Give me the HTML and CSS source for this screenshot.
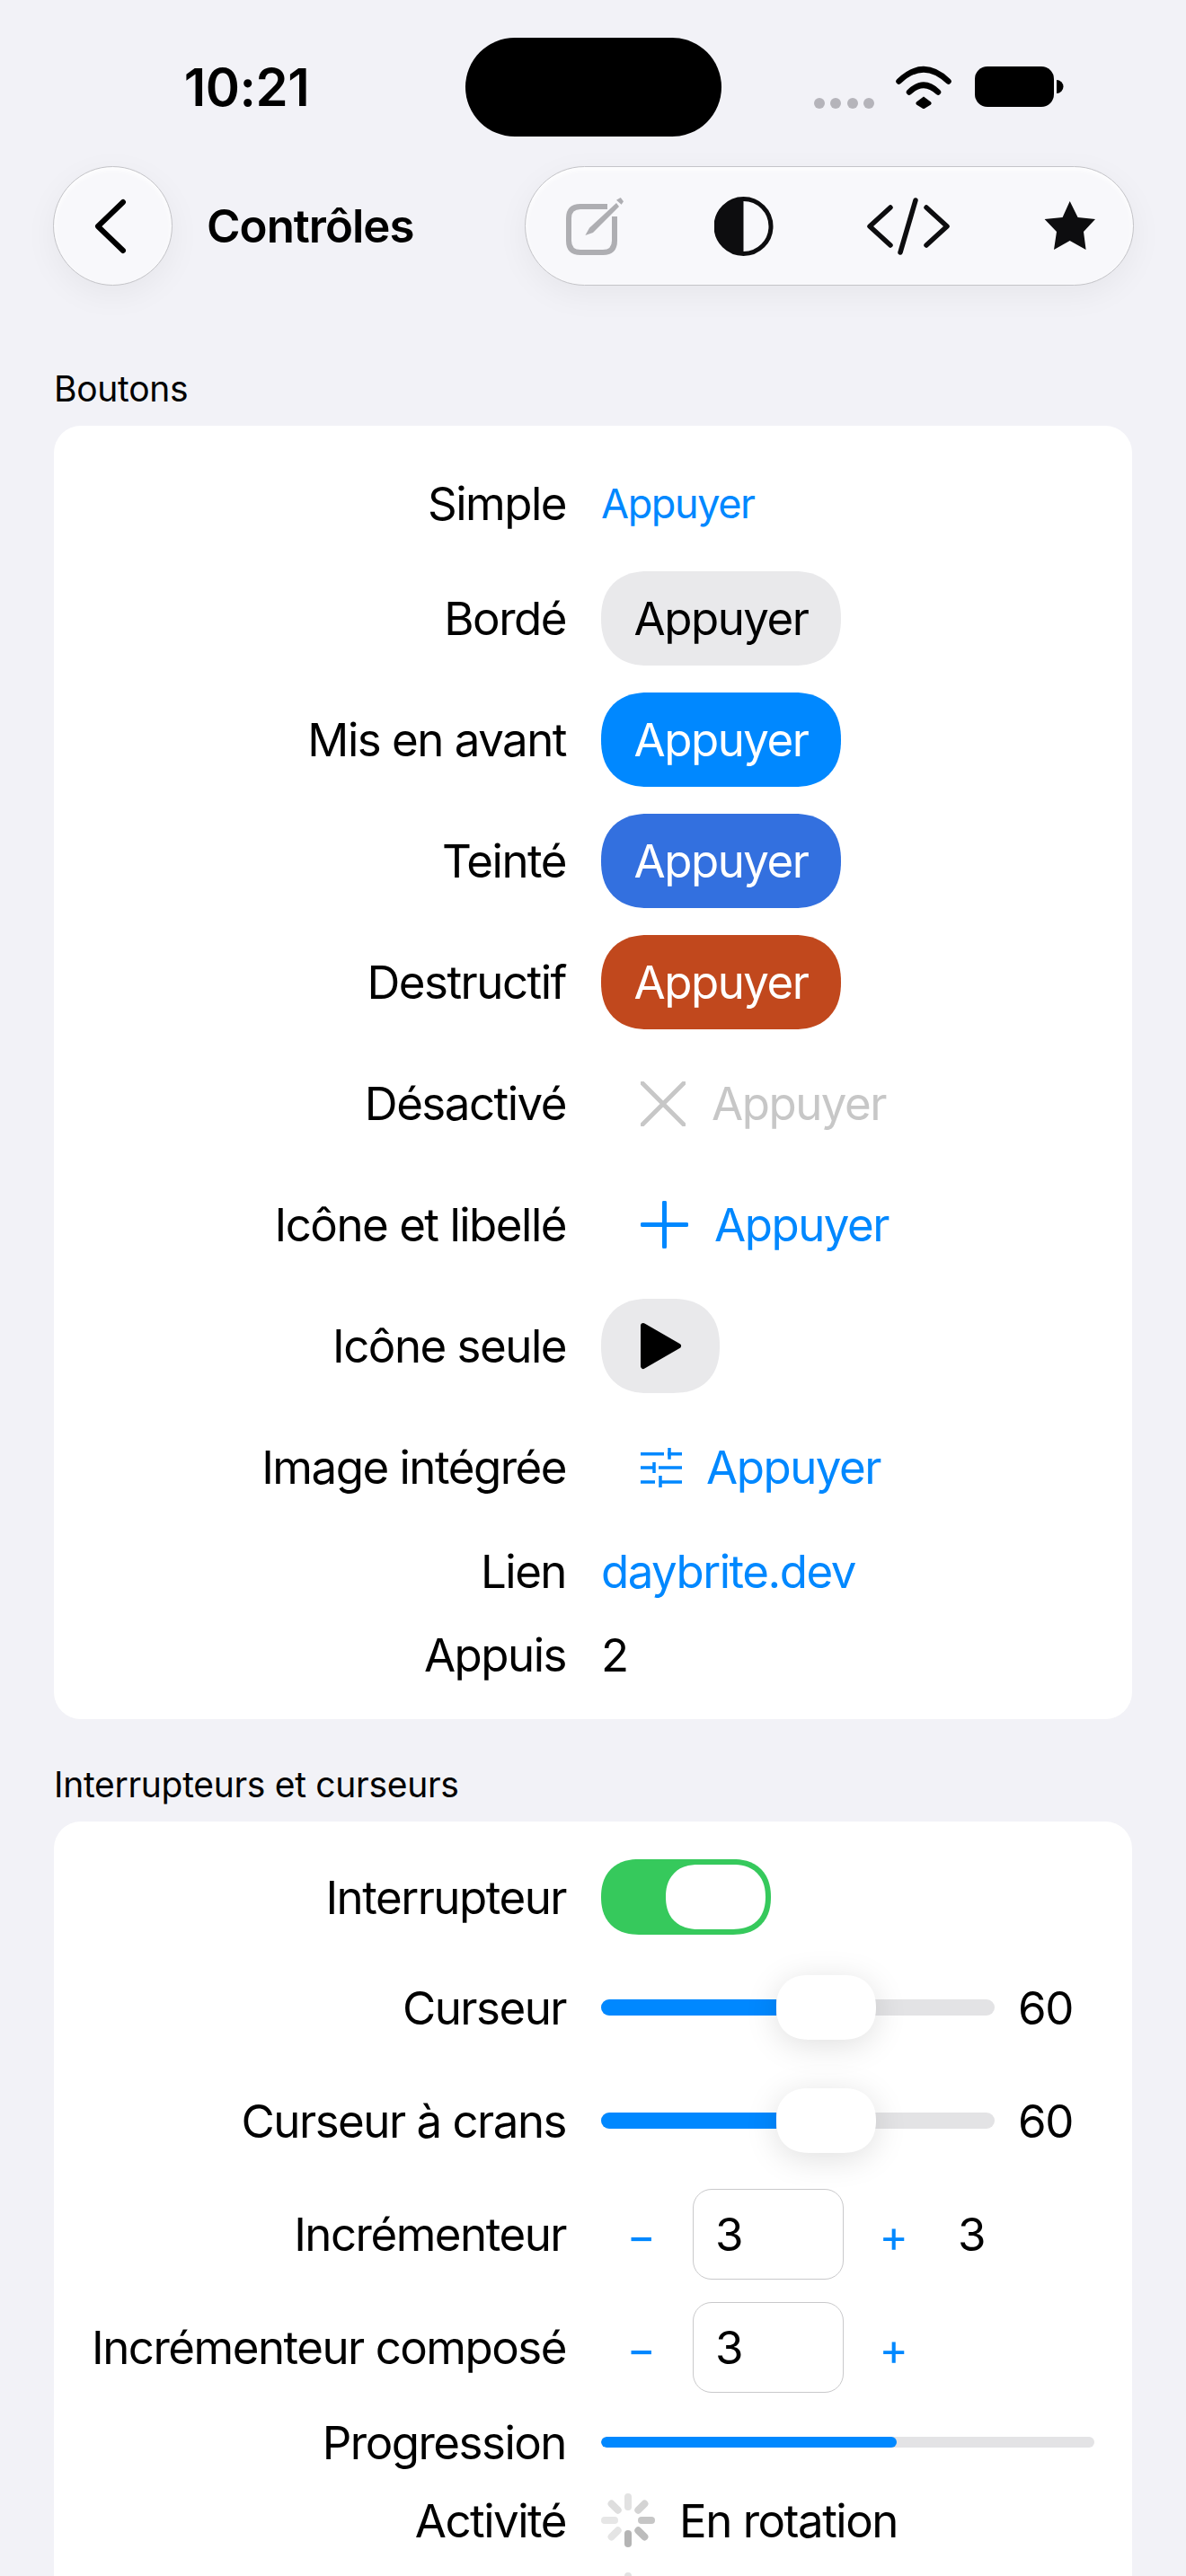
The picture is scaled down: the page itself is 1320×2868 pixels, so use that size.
FILE: index.html
```html
<!DOCTYPE html>
<html lang="fr">
<head>
<meta charset="utf-8">
<title>Contrôles</title>
<link rel="stylesheet" href="styles.css">
</head>
<body>
<div class="screen">
  <header class="status">
    <div class="time">10:21</div>
    <div class="island"></div>
    <svg class="status-icons" viewBox="900 70 290 55" width="290" height="55">
      <g fill="#b5b4ba"><circle cx="912" cy="115" r="6"/><circle cx="930" cy="115" r="6"/><circle cx="949" cy="115" r="6"/><circle cx="967" cy="115" r="6"/></g>
      <g fill="none" stroke="#000" stroke-width="6.5" stroke-linecap="round"><path d="M1000.5 90.5Q1028 64 1055.5 90.5"/><path d="M1012 102.5Q1028 87 1044 102.5"/></g>
      <path d="M1028 107.5L1036 113.5Q1037.5 115 1036 116.5L1029.5 120.5Q1028 121.5 1026.5 120.5L1020 116.5Q1018.5 115 1020 113.5Z" fill="#000"/>
      <rect x="1085" y="74" width="88" height="45" rx="14" fill="#000"/>
      <path d="M1176 89A7.5 7.5 0 0 1 1176 104Z" fill="#000"/>
    </svg>
  </header>

  <nav class="nav">
    <button class="glass back" type="button">
      <svg viewBox="0 0 44 64" width="44" height="64"><path d="M33 5L5 32L33 59" fill="none" stroke="#000" stroke-width="6" stroke-linecap="round" stroke-linejoin="round"/></svg>
    </button>
    <h1 class="title">Contrôles</h1>
    <div class="glass pill">
      <svg viewBox="630 218 64 66" width="64" height="66">
        <path d="M676 229H646Q633 229 633 242V267Q633 280 646 280H671Q684 280 684 267V240" fill="none" stroke="#aeaeb2" stroke-width="6"/>
        <path d="M651.400 261L656 252.700L686 225L689 229L660 258Z" fill="#aeaeb2"/>
        <path d="M686 221.700L690.700 219L694 223.300L691.600 226.700Z" fill="#aeaeb2"/>
      </svg>
      <svg viewBox="795 220 66 66" width="66" height="66">
        <circle cx="827.500" cy="253" r="30.500" fill="none" stroke="#0d0d0f" stroke-width="5"/>
        <path d="M827.500 222A31 31 0 0 0 827.500 284Z" fill="#0d0d0f"/>
      </svg>
      <svg viewBox="962 220 98 66" width="98" height="66">
        <g fill="none" stroke="#0d0d0f" stroke-width="5.500" stroke-linecap="round" stroke-linejoin="round">
          <path d="M991 232L968 253L991 274"/><path d="M1019 224L1002 282"/><path d="M1031 232L1054 253L1031 274"/>
        </g>
      </svg>
      <svg viewBox="1161 222 61 60" width="61" height="60">
        <path d="M1190.700 224L1199.600 242L1219 244L1206 258L1208.600 278L1190.700 268L1173 278L1176 258L1162.600 244L1182.600 242Z" fill="#0d0d0f"/>
      </svg>
    </div>
  </nav>

  <section class="section">
    <h2 class="section-title">Boutons</h2>
    <div class="card card-buttons">
      <div class="row row-simple"><span class="label">Simple</span><span class="plain">Appuyer</span></div>
      <div class="row row-btn"><span class="label">Bordé</span><span class="btn btn-gray">Appuyer</span></div>
      <div class="row row-btn"><span class="label">Mis en avant</span><span class="btn btn-blue">Appuyer</span></div>
      <div class="row row-btn"><span class="label">Teinté</span><span class="btn btn-tint">Appuyer</span></div>
      <div class="row row-btn"><span class="label">Destructif</span><span class="btn btn-red">Appuyer</span></div>
      <div class="row row-btn"><span class="label">Désactivé</span>
        <span class="icon-text disabled">
          <svg viewBox="0 0 50 50" width="50" height="50"><path d="M2 2L48 48M48 2L2 48" fill="none" stroke="#c7c7c7" stroke-width="5" stroke-linecap="round"/></svg>Appuyer
        </span>
      </div>
      <div class="row row-btn"><span class="label">Icône et libellé</span>
        <span class="icon-text link">
          <svg viewBox="0 0 53 53" width="53" height="53"><path d="M26.500 2V51M2 26.500H51" fill="none" stroke="#0088ff" stroke-width="5" stroke-linecap="round"/></svg>Appuyer
        </span>
      </div>
      <div class="row row-btn"><span class="label">Icône seule</span>
        <span class="btn btn-gray btn-icon">
          <svg viewBox="0 0 47 53" width="47" height="53"><path d="M4 4L43 26.500L4 49Z" fill="#000" stroke="#000" stroke-width="6" stroke-linejoin="round"/></svg>
        </span>
      </div>
      <div class="row row-btn"><span class="label">Image intégrée</span>
        <span class="icon-text link icon-text-tight">
          <svg viewBox="0 0 46 44" width="46" height="44"><path d="M0 6.700H26M30 6.700H46M32 0V12.700M0 22H16M20 22H46M15 16V28M0 38H16M21 38H46M22 31V44" fill="none" stroke="#0088ff" stroke-width="3.500"/></svg>Appuyer
        </span>
      </div>
      <div class="row row-link"><span class="label">Lien</span><span class="link">daybrite.dev</span></div>
      <div class="row row-count"><span class="label">Appuis</span><span class="value">2</span></div>
    </div>
  </section>

  <section class="section">
    <h2 class="section-title">Interrupteurs et curseurs</h2>
    <div class="card card-controls">
      <div class="row row-a"><span class="label">Interrupteur</span><span class="toggle"><span class="toggle-thumb"></span></span></div>
      <div class="row row-b"><span class="label">Curseur</span>
        <span class="slider-wrap"><span class="slider"><span class="slider-fill" style="width:195px"></span><span class="slider-thumb" style="left:195px"></span></span><span class="value">60</span></span>
      </div>
      <div class="row row-b"><span class="label">Curseur à crans</span>
        <span class="slider-wrap"><span class="slider"><span class="slider-fill" style="width:195px"></span><span class="slider-thumb" style="left:195px"></span></span><span class="value">60</span></span>
      </div>
      <div class="row row-b"><span class="label">Incrémenteur</span>
        <span class="stepper"><span class="step-btn">−</span><span class="step-box">3</span><span class="step-btn">+</span><span class="value step-value">3</span></span>
      </div>
      <div class="row row-b"><span class="label">Incrémenteur composé</span>
        <span class="stepper"><span class="step-btn">−</span><span class="step-box">3</span><span class="step-btn">+</span></span>
      </div>
      <div class="row row-c"><span class="label">Progression</span><span class="progress"><span class="progress-fill" style="width:60%"></span></span></div>
      <div class="row row-d"><span class="label">Activité</span>
        <span class="activity">
          <svg viewBox="0 0 60 60" width="60" height="60" fill="none" stroke-width="8" stroke-linecap="round">
            <path d="M30 4V15" stroke="#e2e2e2"/><path d="M48.400 11.600L41.300 18.700" stroke="#d4d4d4"/><path d="M56 30H45" stroke="#c6c6c6"/><path d="M48.400 48.400L41.300 41.300" stroke="#bcbcbc"/><path d="M30 56V45" stroke="#b4b4b4"/><path d="M11.600 48.400L18.700 41.300" stroke="#e4e4e4"/><path d="M4 30H15" stroke="#e6e6e6"/><path d="M11.600 11.600L18.700 18.700" stroke="#dedede"/>
          </svg>
          <span class="value">En rotation</span>
        </span>
      </div>
      <div class="row row-d"><span class="label"></span>
        <span class="activity">
          <svg viewBox="0 0 60 60" width="60" height="60" fill="none" stroke-width="8" stroke-linecap="round">
            <path d="M30 4V15" stroke="#e2e2e2"/><path d="M48.400 11.600L41.300 18.700" stroke="#d4d4d4"/><path d="M56 30H45" stroke="#c6c6c6"/><path d="M48.400 48.400L41.300 41.300" stroke="#bcbcbc"/><path d="M30 56V45" stroke="#b4b4b4"/><path d="M11.600 48.400L18.700 41.300" stroke="#e4e4e4"/><path d="M4 30H15" stroke="#e6e6e6"/><path d="M11.600 11.600L18.700 18.700" stroke="#dedede"/>
          </svg>
        </span>
      </div>
    </div>
  </section>
</div>
</body>
</html>
```

FILE: styles.css
```css
* { box-sizing: border-box; }
html, body { margin: 0; padding: 0; }
body {
  background: #f2f2f7;
  color: #000;
  font-family: Inter, "Liberation Sans", sans-serif;
  font-size: 51px;
  letter-spacing: -1.5px;
  height: 2868px;
  overflow: hidden;
}
.screen { width: 1320px; height: 2868px; overflow: hidden; }
svg { display: block; flex: none; }

.status { display: flex; align-items: flex-start; padding-top: 42px; height: 152px; }
.time { width: 518px; padding-left: 31px; height: 110px; line-height: 110px; text-align: center; font-size: 58px; font-weight: 600; letter-spacing: -.5px; }
.island { width: 285px; height: 110px; border-radius: 55px; background: #000; }
.status-icons { margin: 28px 0 0 97px; }

.nav { display: flex; align-items: center; margin-top: 33px; margin-bottom: 90px; padding: 0 58px 0 59px; height: 133px; }
.glass {
  background: #f8f8fb;
  border: 1.5px solid #c4c4c8;
  box-shadow: 0 10px 36px rgba(0, 0, 0, .05), inset 0 3px 6px rgba(255, 255, 255, .9);
}
.back { width: 133px; height: 133px; border-radius: 50%; padding: 0; display: flex; align-items: center; justify-content: center; }
.title { margin: 0 0 0 38px; font-size: 51px; font-weight: 600; letter-spacing: -1px; }
.pill { margin-left: auto; width: 678px; height: 133px; border-radius: 66.5px; display: flex; align-items: center; gap: 101px; padding-left: 45px; }

.section { margin-bottom: 48px; }
.section-title { margin: 0 0 16px 60px; font-size: 39px; font-weight: 400; line-height: 50px; letter-spacing: -.3px; }
.card { margin: 0 60px; background: #fff; border-radius: 30px; display: flex; flex-direction: column; }
.card-buttons { padding: 42px 0; gap: 30px; }
.card-controls { padding-top: 24px; }

.row { display: grid; grid-template-columns: 570px 1fr; column-gap: 39px; align-items: center; }
.label { text-align: right; }
.row-simple { height: 90px; padding-bottom: 2px; }
.row-btn { height: 105px; }
.row-link { height: 66px; }
.row-count { height: 60px; padding-bottom: 2px; }
.row-a { height: 120px; }
.row-b { height: 126px; }
.row-c { height: 86px; }
.row-d { height: 88px; }

.plain { font-size: 45px; color: #0088ff; letter-spacing: -1.4px; }
.link { color: #0088ff; }
.btn { display: flex; align-items: center; justify-content: center; width: 267px; height: 105px; border-radius: 52px; corner-shape: superellipse(1.2); }
.btn-gray { background: #e9e9eb; }
.btn-blue { background: #0088ff; color: #fff; }
.btn-tint { background: #3370df; color: #fff; }
.btn-red { background: #c1481d; color: #fff; }
.btn-icon { width: 132px; }
.icon-text { display: flex; align-items: center; gap: 29px; padding-left: 44px; }
.icon-text-tight { gap: 27px; }
.disabled { color: #c7c7c7; }

.toggle { display: block; width: 189px; height: 84px; padding: 6px; border-radius: 42px; corner-shape: superellipse(1.2); background: #36c95c; }
.toggle-thumb { display: block; width: 111px; height: 72px; margin-left: 66px; border-radius: 36px; corner-shape: superellipse(1.2); background: #fff; }
.slider-wrap { display: flex; align-items: center; }
.slider { position: relative; display: block; width: 438px; height: 18px; border-radius: 9px; background: #e3e3e5; }
.slider-fill { display: block; height: 18px; border-radius: 9px 0 0 9px; background: #0088ff; }
.slider-thumb { position: absolute; top: -27px; width: 111px; height: 72px; border-radius: 36px; corner-shape: superellipse(1.2); background: #fff; box-shadow: 0 6px 36px rgba(0, 0, 0, .13); }
.slider-wrap .value { margin-left: 26px; }

.stepper { display: flex; align-items: center; gap: 14px; }
.step-btn { width: 88px; text-align: center; color: #0088ff; font-size: 49px; line-height: 60px; padding-top: 6px; }
.step-box { width: 168px; height: 101px; margin-right: -3px; border: 1.5px solid #c9c9cb; border-radius: 21px; display: flex; align-items: center; padding-left: 24px; }
.step-value { margin-left: 14px; }

.progress { display: block; width: 549px; height: 12px; border-radius: 6px; background: #e3e3e5; overflow: hidden; }
.progress-fill { display: block; height: 12px; border-radius: 6px; background: #0088ff; }
.activity { display: flex; align-items: center; gap: 27px; }
```
